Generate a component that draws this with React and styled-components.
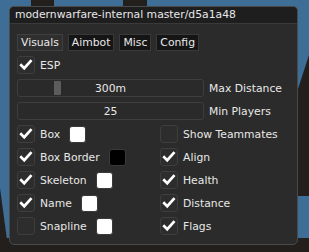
import React, { useState } from "react";
import styled, { createGlobalStyle } from "styled-components";

const GlobalStyle = createGlobalStyle`
  html, body {
    margin: 0;
    padding: 0;
    background: #3e6d96;
  }
  * {
    box-sizing: border-box;
  }
`;

const leftRows = [
  { label: "Box", checked: true, color: "#ffffff" },
  { label: "Box Border", checked: true, color: "#000000" },
  { label: "Skeleton", checked: true, color: "#ffffff" },
  { label: "Name", checked: true, color: "#ffffff" },
  { label: "Snapline", checked: false, color: "#ffffff" },
];

const rightRows = [
  { label: "Show Teammates", checked: false },
  { label: "Align", checked: true },
  { label: "Health", checked: true },
  { label: "Distance", checked: true },
  { label: "Flags", checked: true },
];

const tabs = ["Visuals", "Aimbot", "Misc", "Config"];

function Wallpaper() {
  return (
    <WallpaperSvg viewBox="0 0 309 252" width="309" height="252">
      <rect x="0" y="0" width="309" height="252" fill="#3e6d96" />
      <rect x="31" y="0" width="23" height="20" fill="#221f1d" />
      <rect x="123" y="0" width="24" height="20" fill="#221f1d" />
      <polygon points="309,55 297,92 297,196 309,196" fill="#221f1d" />
      <polygon points="0,188 7,240 0,252" fill="#221f1d" />
      <rect x="0" y="238" width="309" height="14" fill="#221f1d" />
    </WallpaperSvg>
  );
}

function CheckBox({ checked, onToggle }) {
  return (
    <Box onClick={onToggle}>
      {checked && (
        <svg width="18" height="18" viewBox="0 0 18 18">
          <path
            d="M3.6 9.2 L7 12.6 L14.2 4.6"
            fill="none"
            stroke="#ffffff"
            strokeWidth="3"
            strokeLinecap="square"
          />
        </svg>
      )}
    </Box>
  );
}

function CheckItem({ item }) {
  const [checked, setChecked] = useState(item.checked);
  return (
    <Item>
      <CheckBox checked={checked} onToggle={() => setChecked(!checked)} />
      <Label>{item.label}</Label>
      {item.color && <Swatch color={item.color} />}
    </Item>
  );
}

function Slider({ value, grab, label }) {
  return (
    <SliderRow>
      <SliderFrame>
        {grab !== undefined && <Grab style={{ left: grab }} />}
        <SliderValue>{value}</SliderValue>
      </SliderFrame>
      <Label>{label}</Label>
    </SliderRow>
  );
}

function App() {
  const [active, setActive] = useState("Visuals");

  return (
    <Desktop>
      <GlobalStyle />
      <Wallpaper />
      <Window>
        <TitleBar>modernwarfare-internal master/d5a1a48</TitleBar>
        <Content>
          <TabBar>
            {tabs.map((t) => (
              <Tab key={t} active={t === active} onClick={() => setActive(t)}>
                {t}
              </Tab>
            ))}
          </TabBar>
          <CheckItem item={{ label: "ESP", checked: true }} />
          <Slider value="300m" grab={36} label="Max Distance" />
          <Slider value="25" label="Min Players" />
          <Columns>
            <Column>
              {leftRows.map((r) => (
                <CheckItem key={r.label} item={r} />
              ))}
            </Column>
            <Column>
              {rightRows.map((r) => (
                <CheckItem key={r.label} item={r} />
              ))}
            </Column>
          </Columns>
        </Content>
      </Window>
    </Desktop>
  );
}

export default App;

const Desktop = styled.div`
  position: relative;
  width: 309px;
  height: 252px;
  overflow: hidden;
  padding: 6px 0 0 9px;
  font-family: "DejaVu Sans", Verdana, sans-serif;
  font-size: 10.8px;
  color: #e8e8e8;
`;

const WallpaperSvg = styled.svg`
  position: absolute;
  left: 0;
  top: 0;
  display: block;
`;

const Window = styled.div`
  position: relative;
  width: 289px;
  height: 239px;
  background: #2b2b2b;
  border: 1px solid #4a4a4a;
  border-radius: 5px;
  overflow: hidden;
  display: flex;
  flex-direction: column;
`;

const TitleBar = styled.div`
  height: 17px;
  background: #1e1e1e;
  border-bottom: 1px solid #3a3a3a;
  padding-left: 5px;
  line-height: 16px;
  white-space: nowrap;
`;

const Content = styled.div`
  padding: 10px 0 0 7px;
  display: flex;
  flex-direction: column;
  gap: 5px;
`;

const TabBar = styled.div`
  display: flex;
  gap: 5px;
  height: 17px;
`;

const Tab = styled.div`
  height: 17px;
  padding: 0 3px;
  line-height: 15px;
  border: 1px solid ${(p) => (p.active ? "#404040" : "#393939")};
  background: ${(p) => (p.active ? "#2f2f2f" : "#151515")};
  cursor: pointer;
`;

const Item = styled.div`
  display: flex;
  align-items: center;
  height: 18px;
`;

const Box = styled.div`
  width: 18px;
  height: 18px;
  flex: none;
  border: 1px solid #3e3e3e;
  border-radius: 3px;
  background: #2d2d2d;
  display: flex;
  align-items: center;
  justify-content: center;
  cursor: pointer;
  svg {
    display: block;
  }
`;

const Label = styled.span`
  margin-left: 5px;
  white-space: nowrap;
`;

const Swatch = styled.div`
  width: 17px;
  height: 17px;
  margin-left: 9px;
  border-radius: 3px;
  border: 1px solid #3a3a3a;
  background: ${(p) => p.color};
`;

const SliderRow = styled.div`
  display: flex;
  align-items: center;
  height: 18px;
`;

const SliderFrame = styled.div`
  position: relative;
  width: 187px;
  height: 18px;
  border: 1px solid #3e3e3e;
  border-radius: 3px;
  background: #2a2a2a;
  display: flex;
  align-items: center;
  justify-content: center;
`;

const Grab = styled.div`
  position: absolute;
  top: 1px;
  bottom: 1px;
  width: 7px;
  border-radius: 1px;
  background: #5c5c5c;
`;

const SliderValue = styled.span`
  position: relative;
`;

const Columns = styled.div`
  display: grid;
  grid-template-columns: 143px 1fr;
`;

const Column = styled.div`
  display: flex;
  flex-direction: column;
  gap: 5px;
`;
